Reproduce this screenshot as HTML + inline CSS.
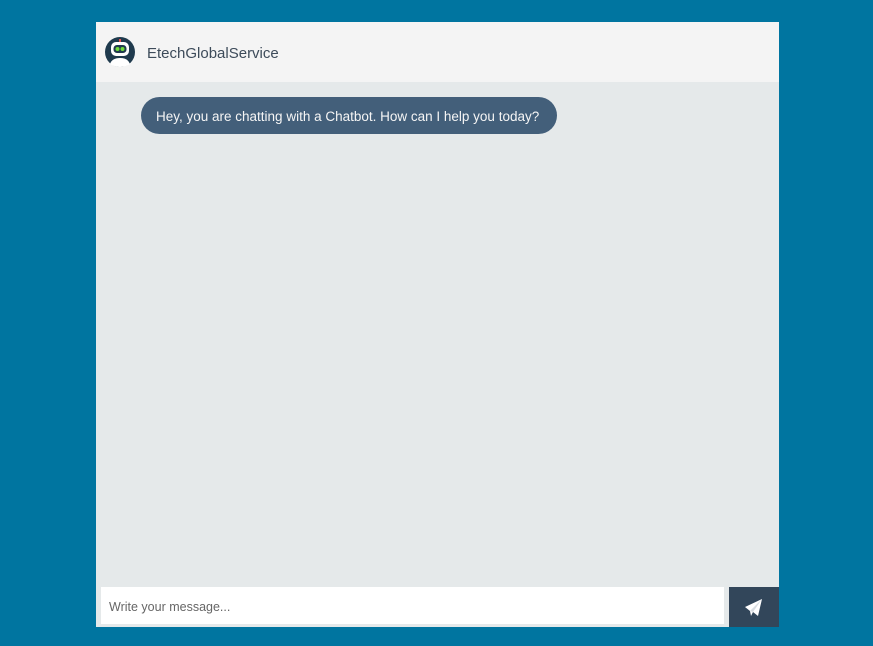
<!DOCTYPE html>
<html><head><meta charset="utf-8"><style>
*{margin:0;padding:0;box-sizing:border-box}
body{width:873px;height:646px;background:#0075a0;font-family:"Liberation Sans",sans-serif;position:relative;overflow:hidden}
.card{position:absolute;left:96px;top:22px;width:683px;height:605px;background:#e5e9ea}
.hdr{position:absolute;left:0;top:0;width:683px;height:60px;background:#f4f4f4}
.name{position:absolute;left:51px;top:23px;font-size:15px;color:#3d4b5a}
.av{position:absolute;left:8px;top:14px}
.bub{position:absolute;left:45px;top:75px;width:416px;height:37px;border-radius:19px;background:#435f7a;color:#f5f5f5;font-size:13.5px;line-height:39px;padding-left:15px;white-space:nowrap}
.inp{position:absolute;left:5px;top:565px;width:623px;height:37px;background:#fff;color:#666;font-size:12.5px;line-height:41px;padding-left:8px}
.btn{position:absolute;left:633px;top:565px;width:50px;height:40px;background:#32465a}
</style></head><body>
<div class="card">
<div class="hdr">
<svg class="av" width="32" height="32" viewBox="0 0 32 32">
<circle cx="16" cy="16" r="15" fill="#1f3a4d"/>
<rect x="15" y="3" width="2" height="3" fill="#e05050"/>
<rect x="7" y="6" width="18" height="14" rx="5" fill="#fff"/>
<rect x="9.5" y="9" width="13" height="8" rx="3.5" fill="#1f3a4d"/>
<circle cx="13.5" cy="13" r="2" fill="#6fdc3a"/>
<circle cx="18.5" cy="13" r="2" fill="#6fdc3a"/>
<path d="M6 28 Q8 22 16 22 Q24 22 26 28 Q21 31 16 31 Q11 31 6 28Z" fill="#fff"/>
</svg>
<div class="name">EtechGlobalService</div>
</div>
<div class="bub">Hey, you are chatting with a Chatbot. How can I help you today?</div>
<div class="inp">Write your message...</div>
<div class="btn"><svg width="50" height="40" viewBox="0 0 50 40">
<path d="M16 20 L33 12 L29 29 L24 25 L22 29 L21 24 Z" fill="#fff"/>
<path d="M21 24 L33 12 L24 25 Z" fill="#d8dde2"/>
</svg></div>
</div>
</body></html>
